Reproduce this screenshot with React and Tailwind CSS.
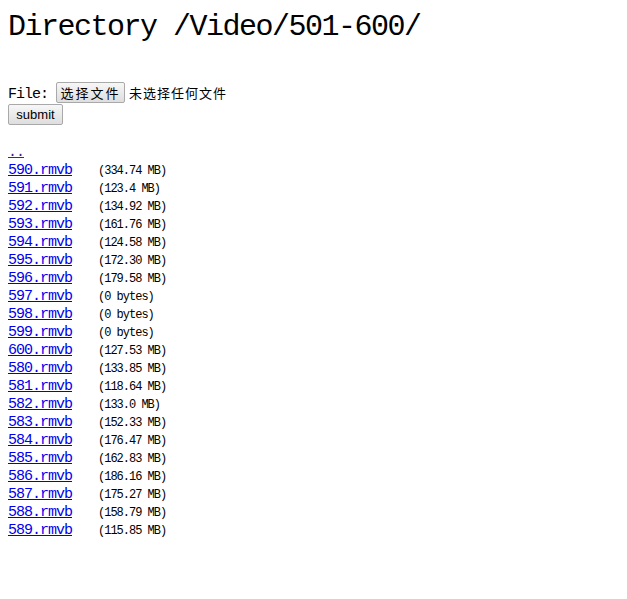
import React from "react";

const files = [
    ["590.rmvb", "(334.74 MB)"],
    ["591.rmvb", "(123.4 MB)"],
    ["592.rmvb", "(134.92 MB)"],
    ["593.rmvb", "(161.76 MB)"],
    ["594.rmvb", "(124.58 MB)"],
    ["595.rmvb", "(172.30 MB)"],
    ["596.rmvb", "(179.58 MB)"],
    ["597.rmvb", "(0 bytes)"],
    ["598.rmvb", "(0 bytes)"],
    ["599.rmvb", "(0 bytes)"],
    ["600.rmvb", "(127.53 MB)"],
    ["580.rmvb", "(133.85 MB)"],
    ["581.rmvb", "(118.64 MB)"],
    ["582.rmvb", "(133.0 MB)"],
    ["583.rmvb", "(152.33 MB)"],
    ["584.rmvb", "(176.47 MB)"],
    ["585.rmvb", "(162.83 MB)"],
    ["586.rmvb", "(186.16 MB)"],
    ["587.rmvb", "(175.27 MB)"],
    ["588.rmvb", "(158.79 MB)"],
    ["589.rmvb", "(115.85 MB)"],
];

const mono = "font-['Liberation_Mono','Noto_Sans_CJK_SC',monospace]";
const btn = "h-[21px] px-0 border border-[#a9a9a9] rounded-[2px] bg-gradient-to-b from-[#f7f7f7] to-[#dedede] leading-none text-black flex items-center justify-center whitespace-nowrap";

export default function App() {
    return (
        <div className={`min-h-[599px] bg-white text-black px-2 ${mono}`}>
            <h1 className="pt-[9px] text-[30px] leading-[37px] tracking-[-1.5px] font-normal">Directory /Video/501-600/</h1>

            <form className="mt-[36px]" onSubmit={(e) => e.preventDefault()}>
                <div className="flex items-center h-[21px] text-[15px] tracking-[-1px]">
                    <span className="w-[48px] mt-[5px]">File:</span>
                    <button type="button" className={`${btn} w-[69px] text-[13px] tracking-[2px] font-['Noto_Sans_CJK_SC',sans-serif]`}>选择文件</button>
                    <span className="ml-[4px] text-[13px] tracking-[1px] font-['Noto_Sans_CJK_SC',sans-serif]">未选择任何文件</span>
                </div>
                <button type="submit" className={`${btn} mt-[1px] w-[55px] text-[13px] font-['Liberation_Sans',Arial,sans-serif]`}>submit</button>
            </form>

            <div className="mt-[19px]">
                <div className="h-[18px] flex items-center">
                    <a href="#" className="text-[15px] tracking-[-1px] text-[#551a8b] underline">..</a>
                </div>
                {files.map(([name, size]) => (
                    <div key={name} className="h-[18px] flex items-center">
                        <a href="#" className="w-[90px] text-[15px] tracking-[-1px] text-[#0000ee] underline">{name}</a>
                        <span className="text-[12px] tracking-[-1px]">{size}</span>
                    </div>
                ))}
            </div>
        </div>
    );
}
